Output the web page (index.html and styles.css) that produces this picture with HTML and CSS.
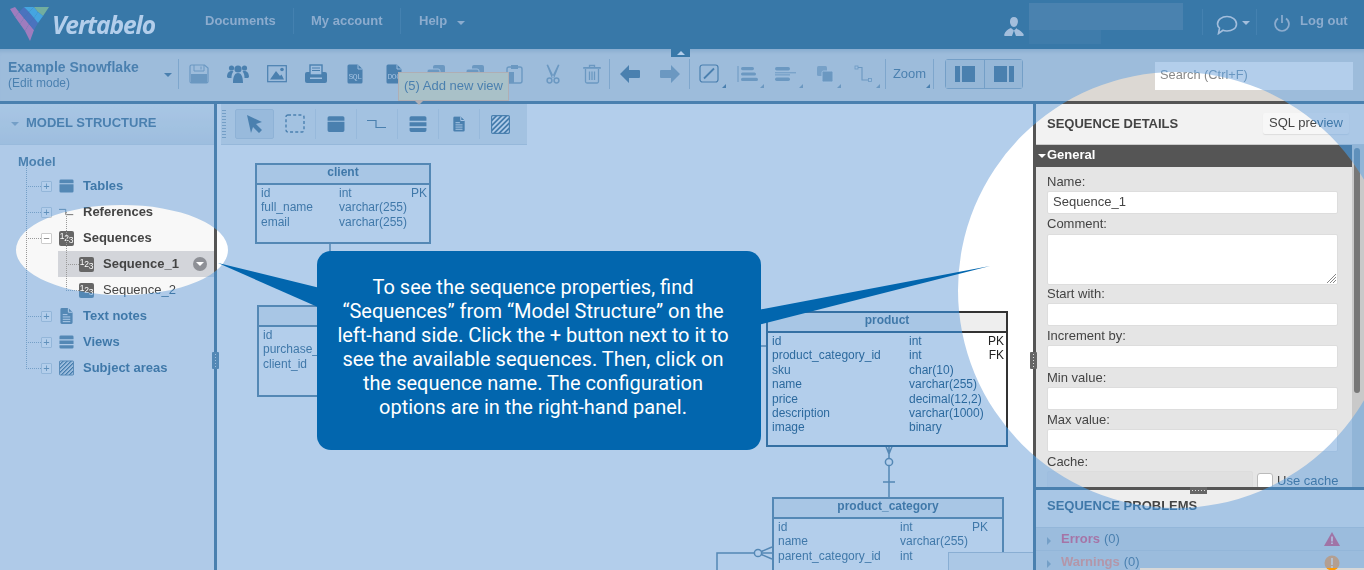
FILE: index.html
```html
<!DOCTYPE html>
<html lang="en">
<head>
<meta charset="utf-8">
<title>Vertabelo - Sequence details</title>
<link rel="stylesheet" href="styles.css">
</head>
<body>
<svg class="defs" width="0" height="0" aria-hidden="true">
  <defs>
    <pattern id="hatch" width="3" height="3" patternUnits="userSpaceOnUse" patternTransform="rotate(45)">
      <rect width="3" height="3" fill="#fff"/><rect width="1.4" height="3" fill="currentColor"/>
    </pattern>
    <symbol id="i-table" viewBox="0 0 16 16"><path fill="currentColor" d="M2 1h12a1.500 1.500 0 0 1 1.500 1.500V5H.5V2.500A1.500 1.500 0 0 1 2 1zM.5 6h15v7.500A1.500 1.500 0 0 1 14 15H2a1.500 1.500 0 0 1-1.500-1.500z"/></symbol>
    <symbol id="i-view" viewBox="0 0 16 16"><path fill="currentColor" d="M2 1h12a1.500 1.500 0 0 1 1.500 1.500V5H.5V2.500A1.500 1.500 0 0 1 2 1zM.5 6.500h15v3.500H.5zM.5 11.500h15v2A1.500 1.500 0 0 1 14 15H2a1.500 1.500 0 0 1-1.500-1.500z"/></symbol>
    <symbol id="i-ref" viewBox="0 0 20 12"><path fill="none" stroke="currentColor" stroke-width="1.200" d="M0 2.500h9V9.500h10"/></symbol>
    <symbol id="i-note" viewBox="0 0 16 18"><path fill="currentColor" d="M3 .5h7l4.500 4.500v11a1.500 1.500 0 0 1-1.500 1.500H3A1.500 1.500 0 0 1 1.500 16V2A1.500 1.500 0 0 1 3 .5z"/><path stroke="#fff" fill="none" d="M10 .5V5h4.500M4 7.500h5M4 10h8M4 12.500h8M4 15h8"/></symbol>
    <symbol id="i-area" viewBox="0 0 16 16"><rect x=".5" y=".5" width="15" height="15" rx="1" fill="url(#hatch)" stroke="currentColor"/></symbol>
    <symbol id="i-save" viewBox="0 0 20 20"><path fill="none" stroke="currentColor" stroke-width="1.200" d="M2.500 1h13l3.500 3v13.500a1.500 1.500 0 0 1-1.500 1.500h-15A1.500 1.500 0 0 1 1 17.500v-15A1.500 1.500 0 0 1 2.500 1z"/><path fill="none" stroke="currentColor" d="M5 1v6h10V1M12 2.500v3"/><rect x="2" y="10" width="16" height="9" fill="currentColor"/></symbol>
    <symbol id="i-people" viewBox="0 0 22 20"><g fill="currentColor"><circle cx="4.500" cy="4" r="2.600"/><circle cx="17.500" cy="4" r="2.600"/><circle cx="11" cy="5" r="3.600"/><path d="M0 13c0-4 2-6 4.500-6 1.300 0 2 .5 2 .5C5 9 4.500 11 4.500 14H1zM22 13c0-4-2-6-4.500-6-1.300 0-2 .5-2 .5 1.500 1.500 2 3.500 2 6.500H21zM6 19c0-7 2-10 5-10s5 3 5 10z"/></g></symbol>
    <symbol id="i-image" viewBox="0 0 20 18"><rect x=".7" y=".7" width="18.600" height="16" fill="none" stroke="currentColor" stroke-width="1.200"/><path fill="currentColor" d="M3 14.500 9 6l4 5 1.500-1.500 2.500 5z"/><circle cx="15" cy="4.500" r="1.800" fill="currentColor"/></symbol>
    <symbol id="i-print" viewBox="0 0 22 20"><path fill="currentColor" d="M2 8h18a2 2 0 0 1 2 2v7a2 2 0 0 1-2 2H2a2 2 0 0 1-2-2v-7a2 2 0 0 1 2-2z"/><rect x="5" y="1" width="12" height="10" fill="#ddd" stroke="currentColor" stroke-width="1.400"/><path stroke="currentColor" d="M7 4h8M7 6.500h8"/><rect x="5" y="13.500" width="12" height="1.500" fill="#ddd"/></symbol>
    <symbol id="i-doc" viewBox="0 0 16 20"><path fill="currentColor" d="M2 .5h9l4.500 4.500v13a1.500 1.500 0 0 1-1.500 1.500H2A1.500 1.500 0 0 1 .5 18V2A1.500 1.500 0 0 1 2 .5z"/><path fill="none" stroke="#ddd" d="M11 .5V5h4.500"/></symbol>
    <symbol id="i-copy" viewBox="0 0 20 20"><g fill="currentColor"><rect x="7" y="1" width="12" height="14" rx="2"/><rect x="1" y="5" width="13" height="14" rx="2" stroke="#ddd"/></g></symbol>
    <symbol id="i-paste" viewBox="0 0 20 20"><rect x="3" y="3" width="15" height="16" rx="2" fill="none" stroke="currentColor" stroke-width="1.400"/><rect x="7" y="1" width="7" height="4" fill="currentColor"/><path fill="currentColor" d="M1 8h9v11H1z"/></symbol>
    <symbol id="i-cut" viewBox="0 0 14 20"><g fill="none" stroke="currentColor" stroke-width="1.500"><circle cx="3.500" cy="16.500" r="2.400"/><circle cx="10.500" cy="16.500" r="2.400"/></g><path fill="currentColor" d="M.5 1 2 .5l6 12.500-2.200 1zM13.500 1 12 .5 6 13l2.200 1z"/></symbol>
    <symbol id="i-trash" viewBox="0 0 18 20"><g fill="none" stroke="currentColor" stroke-width="1.300"><path d="M2.500 5v12.500A1.500 1.500 0 0 0 4 19h10a1.500 1.500 0 0 0 1.500-1.500V5M6.500 3V1.500h5V3M6.500 7.500V16M9 7.500V16M11.500 7.500V16"/></g><rect y="3" width="18" height="1.800" rx=".9" fill="currentColor"/></symbol>
    <symbol id="i-left" viewBox="0 0 22 20"><path fill="currentColor" d="M10 1v5h10a1 1 0 0 1 1 1v6a1 1 0 0 1-1 1H10v5L1 10z"/></symbol>
    <symbol id="i-right" viewBox="0 0 22 20"><path fill="currentColor" d="M12 1v5H2a1 1 0 0 0-1 1v6a1 1 0 0 0 1 1h10v5l9-9z"/></symbol>
    <symbol id="i-edit" viewBox="0 0 20 20"><rect x="1" y="1" width="18" height="17" rx="2.500" fill="none" stroke="currentColor" stroke-width="1.200"/><path stroke="currentColor" stroke-width="1.800" d="M5 14.500 15 4.500"/></symbol>
    <symbol id="i-align" viewBox="0 0 22 18"><path stroke="currentColor" d="M1 1v16"/><g fill="currentColor"><rect x="4" y="2" width="13" height="3.200" rx="1.600"/><rect x="4" y="7.400" width="15" height="3.200" rx="1.600"/><rect x="4" y="12.800" width="17" height="3.200" rx="1.600"/></g></symbol>
    <symbol id="i-dist" viewBox="0 0 22 16"><g fill="currentColor"><rect x="0" y="1" width="15" height="3.400" rx="1.700"/><rect x="0" y="6.300" width="21" height="1"/><rect x="0" y="8.400" width="15" height="1"/><rect x="0" y="11.500" width="15" height="3.400" rx="1.700"/></g></symbol>
    <symbol id="i-order" viewBox="0 0 18 18"><rect x="1" y="1" width="10" height="10" rx="1.500" fill="currentColor" opacity=".75"/><rect x="6" y="6" width="11" height="11" rx="1.500" fill="currentColor" stroke="#ddd"/></symbol>
    <symbol id="i-route" viewBox="0 0 18 18"><path fill="none" stroke="currentColor" stroke-width="1.100" d="M3 2.500h5v12.500h7"/><rect x="1" y="1" width="3" height="3" fill="#ddd" stroke="currentColor" stroke-width=".8"/><rect x="14.500" y="13.500" width="3" height="3" fill="#ddd" stroke="currentColor" stroke-width=".8"/></symbol>
    <symbol id="i-arrow" viewBox="0 0 18 20"><path fill="currentColor" d="M1 1l15 7-6 2 6 6-3 3-6-6-2 6z"/></symbol>
    <symbol id="i-select" viewBox="0 0 20 20"><rect x="1" y="1" width="18" height="17" rx="2" fill="none" stroke="currentColor" stroke-width="1.400" stroke-dasharray="3 2.200"/></symbol>
    <symbol id="i-user" viewBox="0 0 20 20"><path fill="currentColor" d="M10 0c2.600 0 4 2 4 4.500S12.500 10 10 10 6 7 6 4.500 7.400 0 10 0zM7 11l3 2.500-2 5.500H1c-1 0-1-1-.5-2C1 15 4 12 7 11zM13 11l-3 2.500 2 5.500h7c1 0 1-1 .5-2-.5-1-3.500-4-6.500-5z"/></symbol>
    <symbol id="i-chat" viewBox="0 0 22 20"><path fill="none" stroke="currentColor" stroke-width="1.600" d="M11 1.500c5 0 9.500 3 9.500 7.500s-4.500 7-9.500 7c-1.500 0-3-.2-4-.7L2.500 18.500 3.500 13C2 11.800 1.500 10.500 1.500 9 1.500 4.500 6 1.500 11 1.500z"/></symbol>
    <symbol id="i-power" viewBox="0 0 16 18"><path fill="none" stroke="currentColor" stroke-width="1.700" d="M8 1v8M4 4.500C2.200 5.800 1 7.500 1 10a7 7 0 0 0 14 0c0-2.500-1.200-4.200-3-5.500"/></symbol>
    <symbol id="i-panel-l" viewBox="0 0 20 16"><path fill="currentColor" d="M0 0h5v16H0zM7 0h13v16H7z"/></symbol>
    <symbol id="i-panel-r" viewBox="0 0 20 16"><path fill="currentColor" d="M0 0h13v16H0zM15 0h5v16h-5z"/></symbol>
  </defs>
</svg>

<div class="app">
  <header class="topbar">
    <div class="logo">
      <svg class="logo-mark" viewBox="0 0 40 35" width="40" height="35">
        <polygon points="0,2 5,0 9,5 5,10" fill="#de4e7e"/>
        <polygon points="5,10 9,5 14,11 10,17" fill="#de4e7e"/>
        <polygon points="9,5 14,0 19,5 14,11" fill="#55397e"/>
        <polygon points="14,0 24,0 19,5" fill="#4da5e2"/>
        <polygon points="10,17 14,11 19,17 15,24" fill="#de4e7e"/>
        <polygon points="14,11 19,5 24,11 19,17" fill="#55397e"/>
        <polygon points="19,5 24,0 28,5 24,11" fill="#4da5e2"/>
        <polygon points="24,0 39,0 33,9 28,5" fill="#96bb28"/>
        <polygon points="15,24 19,17 24,23 20,34" fill="#de4e7e"/>
        <polygon points="19,17 24,11 28,16 24,23" fill="#55397e"/>
        <polygon points="24,11 28,5 33,9 28,16" fill="#4da5e2"/>
      </svg>
      <span class="logo-text">Vertabelo</span>
    </div>
    <nav class="nav">
      <a class="nav-item nav-docs">Documents</a>
      <a class="nav-item nav-acct">My account</a>
      <a class="nav-item nav-help">Help<i class="caret"></i></a>
    </nav>
    <div class="user">
      <svg class="user-icon" width="20" height="20"><use href="#i-user"/></svg>
      <div class="user-blur"></div>
    </div>
    <div class="chat">
      <svg width="22" height="20"><use href="#i-chat"/></svg><i class="caret"></i>
    </div>
    <div class="logout">
      <svg width="16" height="18"><use href="#i-power"/></svg><span>Log out</span>
    </div>
  </header>

  <div class="toolbar">
    <div class="model-name">
      <div class="model-title">Example Snowflake</div>
      <div class="model-mode">(Edit mode)</div>
      <i class="caret caret-dark"></i>
    </div>
    <div class="tools tools-a">
      <span class="tool dim"><svg width="20" height="20"><use href="#i-save"/></svg></span>
      <span class="tool"><svg width="22" height="20"><use href="#i-people"/></svg></span>
      <span class="tool"><svg width="20" height="18"><use href="#i-image"/></svg></span>
      <span class="tool"><svg width="22" height="20"><use href="#i-print"/></svg></span>
      <span class="tool"><svg width="16" height="20" viewBox="0 0 16 20"><use href="#i-doc"/><text x="8" y="15" class="doc-text">SQL</text></svg></span>
      <span class="tool"><svg width="16" height="20" viewBox="0 0 16 20"><use href="#i-doc"/><text x="8" y="15" class="doc-text">DOC</text></svg></span>
      <span class="tool dim tool-gap"><svg width="20" height="20"><use href="#i-copy"/></svg></span>
      <span class="tool dim"><svg width="20" height="20"><use href="#i-copy"/></svg></span>
      <span class="tool dim"><svg width="20" height="20"><use href="#i-paste"/></svg></span>
      <span class="tool dim"><svg width="14" height="20"><use href="#i-cut"/></svg></span>
      <span class="tool dim"><svg width="18" height="20"><use href="#i-trash"/></svg></span>
    </div>
    <div class="tools tools-b">
      <span class="tool"><svg width="22" height="20"><use href="#i-left"/></svg></span>
      <span class="tool dim"><svg width="22" height="20"><use href="#i-right"/></svg></span>
    </div>
    <div class="tools tools-c">
      <span class="tool corner"><svg width="20" height="20"><use href="#i-edit"/></svg></span>
      <span class="tool corner dim"><svg width="22" height="18"><use href="#i-align"/></svg></span>
      <span class="tool corner dim"><svg width="22" height="16"><use href="#i-dist"/></svg></span>
      <span class="tool corner dim"><svg width="18" height="18"><use href="#i-order"/></svg></span>
      <span class="tool corner dim"><svg width="18" height="18"><use href="#i-route"/></svg></span>
    </div>
    <div class="tools tools-d"><span class="tool zoom corner">Zoom</span></div>
    <div class="tools tools-e">
      <div class="panel-toggle">
        <span class="pt-btn"><svg width="20" height="16"><use href="#i-panel-l"/></svg></span>
        <span class="pt-btn"><svg width="20" height="16"><use href="#i-panel-r"/></svg></span>
      </div>
    </div>
    <div class="search">Search (Ctrl+F)</div>
    <span class="collapse-tab"><i class="tri-up"></i></span>
    <div class="tooltip">(5) Add new view</div>
  </div>

  <main class="main">
    <aside class="left">
      <div class="section-head"><i class="caret caret-mid"></i>MODEL STRUCTURE</div>
      <div class="tree">
        <div class="tree-root">Model</div>
        <div class="row"><i class="exp">+</i><svg class="ticon" width="16" height="16"><use href="#i-table"/></svg><span class="lbl">Tables</span></div>
        <div class="row"><i class="exp">+</i><svg class="ticon" width="16" height="10"><use href="#i-ref"/></svg><span class="lbl">References</span></div>
        <div class="row open"><i class="exp">−</i><span class="seq seq-big"><b>1</b><b>2</b><b>3</b></span><span class="lbl">Sequences</span></div>
        <div class="row sub selected"><span class="seq seq-big"><b>1</b><b>2</b><b>3</b></span><span class="lbl">Sequence_1</span><i class="row-menu"></i></div>
        <div class="row sub sub-last"><span class="seq seq-big"><b>1</b><b>2</b><b>3</b></span><span class="lbl plain">Sequence_2</span></div>
        <div class="row"><i class="exp">+</i><svg class="ticon" width="16" height="18"><use href="#i-note"/></svg><span class="lbl">Text notes</span></div>
        <div class="row"><i class="exp">+</i><svg class="ticon" width="16" height="16"><use href="#i-view"/></svg><span class="lbl">Views</span></div>
        <div class="row last"><i class="exp">+</i><svg class="ticon" width="16" height="16"><use href="#i-area"/></svg><span class="lbl">Subject areas</span></div>
      </div>
      <i class="handle handle-v"></i>
    </aside>

    <section class="canvas">
      <svg class="links" width="816" height="466" viewBox="0 0 816 466">
        <g fill="none" stroke="#666" stroke-width="1.500">
          <path d="M113 140v160"/>
          <path d="M544 242h6"/>
          <path d="M672 343v50M666 378h12M672 350l-6-15M672 350l6-15"/>
          <circle cx="672" cy="358" r="3.600" fill="#fff"/>
          <path d="M555 449h-55v30"/>
          <path d="M555 443l-14 6 14 6"/>
          <circle cx="541" cy="449" r="3.600" fill="#fff"/>
        </g>
      </svg>
      <div class="palette">
        <i class="grip"></i>
        <span class="pal active"><svg width="18" height="20"><use href="#i-arrow"/></svg></span>
        <span class="pal"><svg width="20" height="20"><use href="#i-select"/></svg></span>
        <span class="pal"><svg width="18" height="18"><use href="#i-table"/></svg></span>
        <span class="pal"><svg width="20" height="12"><use href="#i-ref"/></svg></span>
        <span class="pal"><svg width="18" height="18"><use href="#i-view"/></svg></span>
        <span class="pal"><svg width="14" height="18" viewBox="0 0 16 18"><use href="#i-note"/></svg></span>
        <span class="pal"><svg width="19" height="19" viewBox="0 0 16 16"><use href="#i-area"/></svg></span>
      </div>

      <div class="erd erd-client">
        <div class="erd-title">client</div>
        <div class="erd-row"><span>id</span><span>int</span><span>PK</span></div>
        <div class="erd-row"><span>full_name</span><span>varchar(255)</span><span></span></div>
        <div class="erd-row"><span>email</span><span>varchar(255)</span><span></span></div>
      </div>
      <div class="erd erd-purchase">
        <div class="erd-title"></div>
        <div class="erd-row"><span>id</span></div>
        <div class="erd-row"><span>purchase_</span></div>
        <div class="erd-row"><span>client_id</span></div>
      </div>
      <div class="erd erd-product">
        <div class="erd-title">product</div>
        <div class="erd-row"><span>id</span><span>int</span><span>PK</span></div>
        <div class="erd-row"><span>product_category_id</span><span>int</span><span>FK</span></div>
        <div class="erd-row"><span>sku</span><span>char(10)</span><span></span></div>
        <div class="erd-row"><span>name</span><span>varchar(255)</span><span></span></div>
        <div class="erd-row"><span>price</span><span>decimal(12,2)</span><span></span></div>
        <div class="erd-row"><span>description</span><span>varchar(1000)</span><span></span></div>
        <div class="erd-row"><span>image</span><span>binary</span><span></span></div>
      </div>
      <div class="erd erd-category">
        <div class="erd-title">product_category</div>
        <div class="erd-row"><span>id</span><span>int</span><span>PK</span></div>
        <div class="erd-row"><span>name</span><span>varchar(255)</span><span></span></div>
        <div class="erd-row"><span>parent_category_id</span><span>int</span><span></span></div>
      </div>
      <div class="minimap"></div>
    </section>

    <aside class="right">
      <div class="details">
        <div class="details-head">
          <h2>SEQUENCE DETAILS</h2>
          <span class="sql-btn">SQL preview</span>
        </div>
        <div class="details-body">
          <div class="form-col">
            <div class="general"><i class="caret caret-white"></i>General</div>
            <form class="form">
              <label>Name:</label><div class="input">Sequence_1</div>
              <label>Comment:</label><div class="input area"><svg class="grip-corner" width="11" height="11"><path d="M10 1 1 10M10 4 4 10M10 7 7 10" stroke="#888" fill="none"/></svg></div>
              <label>Start with:</label><div class="input"></div>
              <label>Increment by:</label><div class="input"></div>
              <label>Min value:</label><div class="input"></div>
              <label>Max value:</label><div class="input"></div>
              <label>Cache:</label>
              <div class="cache-row"><div class="input disabled"></div><i class="check"></i><span class="use-cache">Use cache</span></div>
            </form>
          </div>
          <div class="scroll"><i class="thumb"></i></div>
        </div>
      </div>
      <div class="problems">
        <i class="handle handle-h"></i>
        <h2>SEQUENCE PROBLEMS</h2>
        <div class="prob-row">
          <i class="tri-right"></i><b class="err">Errors</b><span class="cnt">(0)</span>
          <svg class="prob-icon" width="16" height="14" viewBox="0 0 16 14"><path d="M8 0l8 14H0z" fill="#e03a3a"/><path d="M8 4.500v5M8 10.500v1.500" stroke="#fff" stroke-width="1.400"/></svg>
        </div>
        <div class="prob-row">
          <i class="tri-right"></i><b class="warn">Warnings</b><span class="cnt">(0)</span>
          <svg class="prob-icon" width="16" height="16" viewBox="0 0 16 16"><circle cx="8" cy="8" r="7.500" fill="#ff9900"/><path d="M8 3v7M8 11v2" stroke="#fff" stroke-width="1.400"/></svg>
        </div>
      </div>
      <i class="handle handle-v handle-right"></i>
    </aside>
  </main>
</div>

<div class="tint tint-screen"></div>
<div class="tint tint-multiply"></div>

<svg class="pointers" width="1364" height="570" viewBox="0 0 1364 570" aria-hidden="true">
  <polygon points="218,263 320,288 320,308"/>
  <polygon points="990,266 758,310 758,325"/>
</svg>
<div class="callout">To see the sequence properties, find<br>“Sequences” from “Model Structure” on the<br>left-hand side. Click the + button next to it to<br>see the available sequences. Then, click on<br>the sequence name. The configuration<br>options are in the right-hand panel.</div>
</body>
</html>
```
FILE: styles.css
```css
* { box-sizing: border-box; }
html, body { margin: 0; padding: 0; }
body {
  width: 1364px; height: 570px; overflow: hidden; position: relative;
  background: #fff; color: #444;
  font: 13px/1.2 "Liberation Sans", Arial, sans-serif;
}
.defs { position: absolute; }
i { font-style: normal; display: block; }
h2 { margin: 0; font-size: 13px; }
svg { display: block; }

.app { width: 1364px; height: 570px; display: flex; flex-direction: column; overflow: hidden; position: relative; z-index: 0; }

/* top bar */
.topbar { height: 49px; flex: none; background: #37433f; display: flex; align-items: center; color: #c0b5ae; position: relative; }
.logo { display: flex; align-items: center; width: 187px; padding-left: 10px; flex: none; }
.logo-mark { flex: none; margin-top: -1px; margin-left: 0; }
.logo-text { font: italic 700 24.500px/1 "Open Sans", sans-serif; color: #fff; margin-left: 2px; margin-top: 2px; letter-spacing: -1.100px; }
.nav { display: flex; align-items: center; height: 26px; margin-left: 18px; margin-top: -7px; font-weight: 700; }
.nav-item { display: flex; align-items: center; height: 26px; }
.nav-docs { width: 89px; border-right: 1px solid #4c5856; }
.nav-acct { width: 107px; padding-left: 17px; border-right: 1px solid #4c5856; }
.nav-help { padding-left: 18px; }
.caret { width: 0; height: 0; border: 4px solid transparent; border-top: 4px solid currentColor; border-bottom: 0; }
.nav-help .caret { margin-left: 10px; margin-top: 3px; }
.user { margin-left: auto; display: flex; align-items: center; height: 41px; margin-top: -4px; width: 179px; color: #e6dcd6; flex: none; }
.user-icon { margin-right: 5px; margin-top: 8px; }
.user-blur {
  width: 155px; height: 41px; margin-top: 2px;
  background:
    linear-gradient(#555955, #555955) 0 0/155px 27px no-repeat,
    linear-gradient(#434d49, #434d49) 0 27px/72px 14px no-repeat;
}
.chat { width: 55px; height: 26px; margin-left: 19px; margin-top: -6px; border-left: 1px solid #4c5856; border-right: 1px solid #4c5856; display: flex; align-items: center; padding-left: 13px; gap: 4px; color: #e6dcd6; flex: none; }
.chat svg { margin-top: 6px; }
.chat .caret { margin-top: 2px; }
.logout { display: flex; align-items: center; width: 107px; padding-left: 17px; margin-top: -6px; font-weight: 700; gap: 10px; color: #c0b5ae; flex: none; }
.logout svg { color: #c0b5ae; margin-top: 3px; }
.logout span { margin-top: -2px; }

/* toolbar */
.toolbar { height: 55px; flex: none; display: flex; align-items: flex-start; position: relative; background: #dcd8d3; border-bottom: 3px solid #555; padding-top: 10px; color: #555; box-shadow: inset 0 5px 4px -3px rgba(0,0,0,.18); }
.model-name { width: 178px; height: 30px; padding-left: 8px; position: relative; flex: none; }
.model-title { font-weight: 700; font-size: 14px; line-height: 16px; }
.model-mode { font-size: 12px; line-height: 16px; }
.caret-dark { position: absolute; right: 6px; top: 14px; color: #555; }
.tools { display: flex; height: 30px; border-left: 1px solid #a9a9a9; flex: none; align-items: center; }
.tools-a { width: 431px; }
.tools-b { width: 80px; }
.tools-c { width: 196px; }
.tools-d { width: 48px; }
.tools-e { width: 120px; }
.tool { width: 39px; height: 30px; flex: none; display: flex; align-items: center; justify-content: center; color: #555; position: relative; }
.tool.dim { color: #8a8a8a; }
.tool-gap { margin-left: 3px; }
.tools-b .tool { width: 40px; }
.tools-c .tool { width: 38.500px; }
.zoom { width: 47px; font-size: 13px; }
.corner::after { content: ""; position: absolute; right: 3px; bottom: 1px; border: 2px solid transparent; border-right-color: currentColor; border-bottom-color: currentColor; }
.doc-text { font: 8px "Liberation Mono", monospace; fill: #ddd; text-anchor: middle; letter-spacing: -.4px; }
.panel-toggle { display: flex; margin-left: 11px; border: 1px solid #999; border-radius: 3px; height: 30px; }
.pt-btn { width: 38px; display: flex; align-items: center; justify-content: center; background: #d0cdc9; }
.pt-btn + .pt-btn { border-left: 1px solid #999; }
.search { margin-left: auto; margin-right: 11px; margin-top: 3px; width: 198px; height: 28px; background: #fff; color: #888; padding-left: 5px; line-height: 25px; font-size: 12.800px; flex: none; }
.collapse-tab { position: absolute; left: 671px; top: 0; width: 19px; height: 8px; background: #37433f; display: flex; justify-content: center; align-items: center; }
.tri-up { width: 0; height: 0; border: 4px solid transparent; border-bottom: 4px solid #fff; border-top: 0; }
.tooltip { position: absolute; left: 398px; top: 23px; width: 111px; height: 29px; background: #efe29a; border: 1px solid #f8bb60; padding-left: 5px; line-height: 25px; font-size: 13px; color: #555; z-index: 3; }
.tooltip::after { content: ""; position: absolute; left: 15px; bottom: -5px; border: 5px solid transparent; border-top-color: #f8bb60; border-bottom: 0; }

/* main */
.main { flex: 1; display: flex; min-height: 0; }
.left { width: 217px; flex: none; background: #f8f8f8; border-right: 3px solid #555; position: relative; }
.section-head { height: 41px; background: linear-gradient(#eee, #dcdcdc); border-bottom: 1px solid #d5d5d5; display: flex; align-items: center; font-weight: 700; padding: 0 0 3px 11px; gap: 7px; color: #555; }
.caret-mid { color: #999; margin-top: 3px; }
.tree { padding: 6px 0 0 18px; }
.tree-root { font-weight: 700; color: #555; height: 22px; line-height: 22px; }
.row { height: 26px; display: flex; align-items: center; position: relative; padding-left: 23px; }
.row::before { content: ""; position: absolute; left: 8px; top: -7px; width: 14px; height: 20px; border-left: 1px dotted #999; border-bottom: 1px dotted #999; }
.row + .row::before { top: -13px; height: 26px; }
.row.sub::before { left: 48px; width: 12px; }
.row.sub { padding-left: 61px; }
.row.selected::before { top: -1px; height: 14px; }
.row.sub-last::before { top: -13px; height: 26px; }
.row.sub + .row::before { top: -65px; height: 78px; }
.exp { width: 11px; height: 11px; border: 1px solid #ccc; background: #fff; border-radius: 1px; line-height: 8px; text-align: center; font-size: 11px; color: #777; margin-right: 7px; flex: none; position: relative; z-index: 1; }
.ticon { flex: none; color: #666; width: 15px; margin-right: 9px; }
.lbl { font-weight: 700; color: #444; }
.lbl.plain { font-weight: 400; }
.seq { width: 15px; height: 15px; flex: none; background: #666; border-radius: 2px; color: #fff; display: flex; justify-content: center; margin-right: 9px; font-size: 8.500px; line-height: 8px; letter-spacing: -.3px; }
.seq b { font-weight: 400; display: block; }
.seq b:nth-child(1) { margin-top: 1px; }
.seq b:nth-child(2) { margin-top: 3px; }
.seq b:nth-child(3) { margin-top: 5px; }
.selected { margin-left: 40px; padding-left: 21px !important; width: 156px; background: #d3d5da; }
.selected::before { left: 8px !important; }
.row-menu { position: absolute; left: 135px; top: 6px; width: 14px; height: 14px; border-radius: 50%; background: #8e9096; }
.row-menu::after { content: ""; position: absolute; left: 3px; top: 5px; border: 4px solid transparent; border-top-color: #fff; border-bottom: 0; }
.handle { position: absolute; background: #666 radial-gradient(#ddd 35%, transparent 40%) center/2px 2px; z-index: 2; }
.handle-v { left: 212px; top: 248px; width: 7px; height: 17px; border-radius: 1px; background-size: 3px 3px; background-repeat: repeat-y; }
.handle-right { left: -6px; }
.handle-h { left: 154px; top: -3px; width: 17px; height: 7px; background-size: 3px 3px; background-repeat: repeat-x; }

/* canvas */
.canvas { flex: 1; position: relative; background: #fff; overflow: hidden; }
.links { position: absolute; left: 0; top: 0; }
.palette { position: absolute; left: 4px; top: 0; width: 306px; height: 41px; background: #e6e6e6; border-bottom: 1px solid #d0d0d0; display: flex; padding: 5px 0 0 14px; z-index: 2; }
.grip { position: absolute; left: 1px; top: 5px; width: 4px; height: 29px; background: radial-gradient(#999 40%, transparent 45%) 0 0/2px 3px; }
.pal { width: 41px; height: 30px; display: flex; align-items: center; justify-content: center; color: #555; border-right: 1px solid #d2d2d2; }
.pal:last-child { border-right: 0; }
.pal.active { width: 39px; background: #d4d4d4; border: 1px solid #c4c4c4; border-radius: 2px; margin-right: 1px; }
.erd { position: absolute; background: #fff; border: 2px solid #666; font-size: 12px; line-height: 14.400px; color: #444; }
.erd-title { height: 20px; background: #eee; border-bottom: 2px solid #666; text-align: center; font-weight: 700; line-height: 14px; margin-bottom: 1px; }
.erd-row { display: grid; padding-left: 4px; padding-right: 2px; }
.erd-row span:nth-child(3) { text-align: right; }
.erd-client { left: 38px; top: 59px; width: 176px; height: 81px; }
.erd-client .erd-row { grid-template-columns: 78px 1fr 30px; }
.erd-purchase { left: 40px; top: 201px; width: 176px; height: 92px; }
.erd-product { left: 549px; top: 207px; width: 242px; height: 136px; border-color: #333; }
.erd-product .erd-title { border-color: #333; }
.erd-product .erd-row { grid-template-columns: 137px 1fr 30px; color: #222; }
.erd-category { left: 555px; top: 393px; width: 232px; height: 90px; }
.erd-category .erd-row { grid-template-columns: 122px 72px 1fr; }
.erd-category .erd-row span:nth-child(3) { text-align: left; }
.minimap { position: absolute; right: 0; bottom: 0; width: 85px; height: 18px; background: #f3f3f3; border: 1px solid #bbb; border-right: 0; border-bottom: 0; z-index: 1; }

/* right panel */
.right { width: 331px; flex: none; border-left: 3px solid #555; position: relative; display: flex; flex-direction: column; min-height: 0; background: #e5e5e5; }
.details { height: 383px; flex: none; display: flex; flex-direction: column; overflow: hidden; }
.details-head { height: 41px; flex: none; background: #f2f2f2; display: flex; align-items: center; justify-content: space-between; padding: 0 15px 4px 11px; border-bottom: 1px solid #ccc; }
.details-head h2 { margin-top: 3px; }
.sql-btn { width: 86px; height: 21px; line-height: 19px; text-align: center; background: #f7f7f7; border-radius: 2px; box-shadow: 0 1px 1px #ddd; margin-top: 2px; color: #444; }
.details-body { flex: 1; display: flex; min-height: 0; overflow: hidden; }
.form-col { flex: 1; min-width: 0; }
.general { height: 22px; background: #555; color: #fff; font-weight: 700; line-height: 20px; padding-left: 11px; position: relative; }
.caret-white { position: absolute; left: 2px; top: 9px; color: #fff; }
.form { padding: 7px 14px 0 11px; }
.form label { display: block; height: 17px; line-height: 16px; color: #444; }
.input { height: 23px; background: #fff; border: 1px solid #ddd; border-radius: 2px; line-height: 20px; padding-left: 5px; color: #444; margin-bottom: 2px; position: relative; }
.area { height: 51px; margin-top: 1px; margin-bottom: 1px; }
.grip-corner { position: absolute; right: 0; bottom: 0; }
.cache-row { display: flex; align-items: flex-start; gap: 4px; white-space: nowrap; }
.input.disabled { width: 206px; background: #e0e0e0; flex: none; }
.check { width: 16px; height: 16px; margin-top: 2px; border: 1px solid #bbb; border-radius: 3px; background: #fff; flex: none; }
.use-cache { margin-top: 4px; line-height: 12px; }
.scroll { width: 12px; flex: none; background: #c9c9c9; padding: 3px 0 0 2px; }
.thumb { width: 6px; height: 245px; background: #777; border-radius: 3px; }
.problems { flex: 1; background: #eee; border-top: 3px solid #555; position: relative; }
.problems h2 { height: 38px; line-height: 32px; padding-left: 11px; border-bottom: 1px solid #ccc; color: #444; }
.prob-row { height: 23px; background: #d8d8d8; display: flex; align-items: center; padding-left: 11px; border-bottom: 1px solid #ccc; position: relative; line-height: 20px; }
.tri-right { width: 0; height: 0; border: 4px solid transparent; border-left: 4px solid #999; border-right: 0; margin-right: 9px; margin-top: 4px; }
.err { color: #e83c3c; margin-left: 1px; }
.warn { color: #ff8545; margin-left: 1px; }
.cnt { margin-left: 4px; color: #555; }
.prob-icon { position: absolute; left: 288px; top: 4px; }

/* tint over the whole page, with holes for the highlighted areas */
.tint {
  position: absolute; left: 0; top: 0; width: 1364px; height: 570px; pointer-events: none;
  clip-path: path(evenodd, "M0 0H1364V570H0Z M16 250a106 45 0 1 0 212 0a106 45 0 1 0 -212 0Z M958 290a218 218 0 1 0 436 0a218 218 0 1 0 -436 0Z M1140 568H1364V570H1140Z");
}
.tint-screen { background: rgb(30,110,158); mix-blend-mode: screen; }
.tint-multiply { background: rgb(179,206,235); mix-blend-mode: multiply; }

.pointers { position: absolute; left: 0; top: 0; fill: #0266ae; }
.callout {
  position: absolute; left: 317px; top: 251px; width: 444px; height: 199px;
  background: #0266ae; border-radius: 14px; color: #fff;
  font: 20px/24px Roboto, sans-serif; text-align: center; padding: 24px 12px 0 0;
}
```
